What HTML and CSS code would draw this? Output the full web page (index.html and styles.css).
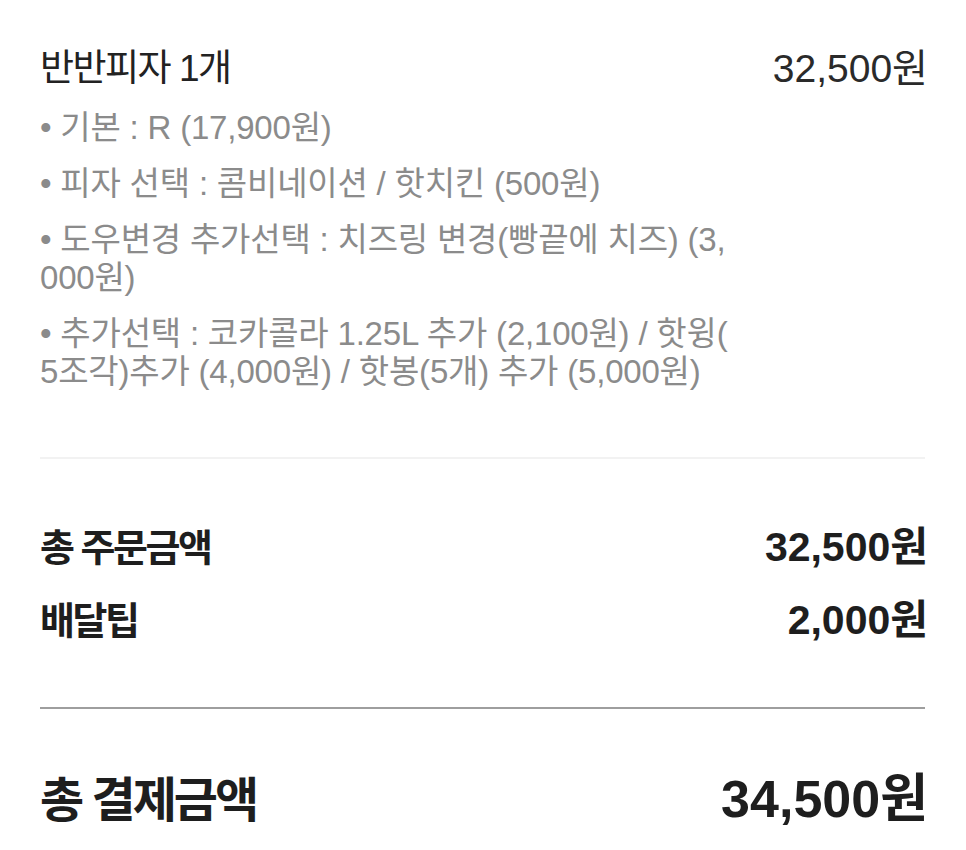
FILE: index.html
```html
<!DOCTYPE html>
<html lang="ko">
<head>
  <meta charset="UTF-8">
  <meta name="viewport" content="width=device-width, initial-scale=1.0">
  <title>주문 내역</title>
  <link rel="stylesheet" href="styles.css">
</head>
<body>
  <div class="order">
    <div class="item">
      <div class="item-info">
        <div class="item-name">반반피자 1개</div>
        <ul class="options">
          <li>• 기본 : R (17,900원)</li>
          <li>• 피자 선택 : 콤비네이션 / 핫치킨 (500원)</li>
          <li>• 도우변경 추가선택 : 치즈링 변경(빵끝에 치즈) (3,<br>000원)</li>
          <li>• 추가선택 : 코카콜라 1.25L 추가 (2,100원) / 핫윙(<br>5조각)추가 (4,000원) / 핫봉(5개) 추가 (5,000원)</li>
        </ul>
      </div>
      <div class="item-price">32,500원</div>
    </div>

    <div class="summary">
      <div class="summary-row">
        <span class="summary-label">총 주문금액</span>
        <span class="summary-amount">32,500원</span>
      </div>
      <div class="summary-row">
        <span class="summary-label">배달팁</span>
        <span class="summary-amount">2,000원</span>
      </div>
    </div>

    <div class="total">
      <span class="total-label">총 결제금액</span>
      <span class="total-amount">34,500원</span>
    </div>
  </div>
</body>
</html>
```

FILE: styles.css
```css
body {
  margin: 0;
  background: #fff;
  font-family: "Liberation Sans", "Noto Sans CJK KR", sans-serif;
  color: #222;
}
.order {
  padding: 0 41px 0 40px;
}

/* item block */
.item {
  display: flex;
  justify-content: space-between;
  align-items: flex-start;
  padding-top: 45px;
  padding-bottom: 66px;
  border-bottom: 2px solid #f2f2f2;
}
.item-info {
  flex: 1;
}
.item-name {
  font-size: 37px;
  line-height: 48px;
  letter-spacing: -1.5px;
  color: #222;
}
.item-price {
  font-size: 39px;
  line-height: 48px;
  color: #2a2a2a;
  white-space: nowrap;
  margin-right: -3px;
}
.options {
  list-style: none;
  margin: 16px 0 0;
  padding: 0;
  font-size: 33px;
  line-height: 38px;
  letter-spacing: -0.2px;
  color: #8b8b8b;
  white-space: nowrap;
}
.options li + li {
  margin-top: 18px;
}

/* totals */
.summary {
  display: flex;
  flex-direction: column;
  gap: 16px;
  padding-top: 60px;
  padding-bottom: 58px;
  border-bottom: 2px solid #9e9e9e;
}
.summary-row {
  display: flex;
  justify-content: space-between;
  align-items: baseline;
  line-height: 56px;
  font-weight: bold;
  color: #1e1e1e;
}
.summary-label {
  font-size: 38px;
  letter-spacing: -2.5px;
}
.summary-amount {
  font-size: 41px;
  margin-right: -3px;
}
.total {
  display: flex;
  justify-content: space-between;
  align-items: baseline;
  padding-top: 58px;
  line-height: 64px;
  font-weight: bold;
  color: #1e1e1e;
}
.total-label {
  font-size: 48px;
  letter-spacing: -3px;
}
.total-amount {
  font-size: 52px;
  margin-right: -3px;
}
```
